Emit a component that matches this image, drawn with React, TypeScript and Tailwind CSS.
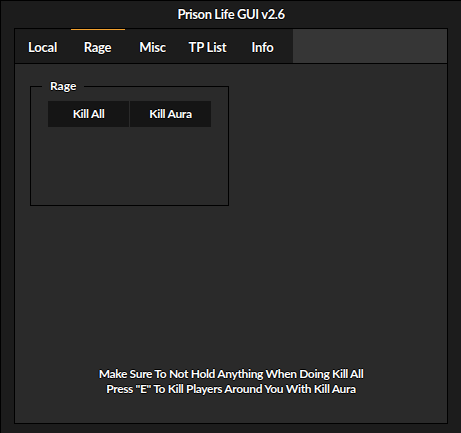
import React from "react";

const stroke =
  "[text-shadow:-1px_0_0_#000,1px_0_0_#000,0_-1px_0_#000,0_1px_0_#000]";

export default function App() {
  const tabs = ["Local", "Rage", "Misc", "TP List", "Info"];
  return (
    <div
      className="w-[461px] h-[433px] bg-[#1c1c1c] border-l border-t border-black flex flex-col text-white font-bold"
      style={{ fontFamily: "Lato, 'Liberation Sans', sans-serif" }}
    >
      <div className={`h-[27px] flex items-center justify-center text-[13px] tracking-[-0.4px] ${stroke}`}>
        Prison Life GUI v2.6
      </div>
      <div className="ml-[13px] w-[434px] h-[396px] border border-black flex flex-col">
        <div className="h-[35px] border-b border-black flex bg-[#363636]">
          <div className="w-[278px] flex bg-[#1c1c1c]">
            {tabs.map((t) => (
              <div
                key={t}
                className={`relative w-[55px] flex items-center justify-center pt-[3px] text-[13px] tracking-[-0.2px] ${stroke}`}
              >
                {t === "Rage" && (
                  <div className="absolute top-0 left-[1px] w-[54px] h-[1px] bg-[#f0a030]" />
                )}
                {t}
              </div>
            ))}
          </div>
        </div>
        <div className="flex-1 bg-[#2a2a2a] flex flex-col">
          <div className="relative ml-[15px] mt-[22px] w-[199px] h-[120px] border border-black">
            <div
              className={`absolute left-[11px] top-[-8px] px-[8px] bg-[#2a2a2a] text-[12px] leading-[14px] ${stroke}`}
            >
              Rage
            </div>
            <div className="ml-[17px] mt-[14px] flex gap-[1px]">
              <div className={`w-[81px] h-[26px] bg-[#151515] flex items-center justify-center text-[12px] tracking-[-0.3px] ${stroke}`}>
                Kill All
              </div>
              <div className={`w-[81px] h-[26px] bg-[#151515] flex items-center justify-center text-[12px] tracking-[-0.3px] ${stroke}`}>
                Kill Aura
              </div>
            </div>
          </div>
          <div className={`mt-auto mb-[27px] flex flex-col items-center text-[12px] leading-[15px] tracking-[-0.35px] ${stroke}`}>
            <div>Make Sure To Not Hold Anything When Doing Kill All</div>
            <div>Press "E" To Kill Players Around You With Kill Aura</div>
          </div>
        </div>
      </div>
    </div>
  );
}
